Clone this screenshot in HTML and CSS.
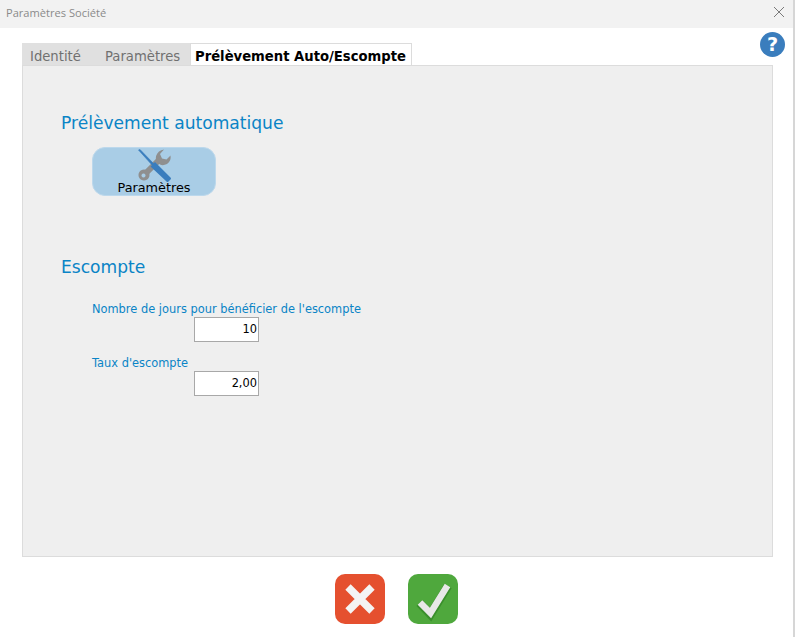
FILE: index.html
```html
<!DOCTYPE html>
<html lang="fr">
<head>
<meta charset="utf-8">
<title>Paramètres Société</title>
<link rel="stylesheet" href="styles.css">
</head>
<body>
<div class="window">
  <header class="titlebar">
    <span class="title">Paramètres Société</span>
    <svg class="close" width="12" height="12" viewBox="0 0 12 12"><path d="M1 1l10 10M11 1L1 11" stroke="#7a7a7a" stroke-width="1" fill="none"/></svg>
  </header>
  <main class="content">
    <div class="tabbar">
      <div class="tabs">
        <span class="tab tab-identite">Identité</span>
        <span class="tab tab-params">Paramètres</span>
        <span class="tab tab-active">Prélèvement Auto/Escompte</span>
      </div>
      <svg class="help" width="25" height="25" viewBox="0 0 26 26"><circle cx="13" cy="13" r="13" fill="#3a7dbd"/><text x="13" y="20" text-anchor="middle" class="help-mark">?</text></svg>
    </div>
    <section class="panel">
      <h2 class="heading">Prélèvement automatique</h2>
      <button class="param-btn" type="button">
        <svg class="tools" width="34" height="33" viewBox="0 0 34 33">
          <path d="M8 24L21 11" stroke="#8f8f8f" stroke-width="6" fill="none"/>
          <path fill-rule="evenodd" d="M6 20.500a5.500 5.500 0 1 1-.01 0zM5.500 24.500a2 2 0 1 0 .01 0z" fill="#8f8f8f"/>
          <path d="M26 .5L22 5l2 4.500 4.500 1 4-4q1 5.500-3.500 8.500-4 2-7 .5L18 12q-1-6 3-9.500Q23 1 26 .5z" fill="#8f8f8f"/>
          <path d="M.5 1L2 .5l14 14.500-1.500 1.500z" fill="#3a7dbd" stroke="#3a7dbd" stroke-width=".6"/>
          <path d="M12.500 17.500l4.500-4.500 15.500 15.500q1 1 0 2l-2 2q-1 1-2 0z" fill="#3a7dbd"/>
        </svg>
        <span class="btn-label">Paramètres</span>
      </button>
      <h2 class="heading heading-escompte">Escompte</h2>
      <div class="field field-days">
        <label class="field-label">Nombre de jours pour bénéficier de l'escompte</label>
        <div class="value">10</div>
      </div>
      <div class="field field-rate">
        <label class="field-label">Taux d'escompte</label>
        <div class="value">2,00</div>
      </div>
    </section>
    <footer class="actions">
      <svg width="50" height="50" viewBox="0 0 50 50"><rect width="50" height="50" rx="10" fill="#e5502f"/><path d="M13 13l24 24M37 13L13 37" stroke="#f4f4f4" stroke-width="7.500" fill="none"/></svg>
      <svg width="50" height="50" viewBox="0 0 50 50"><rect width="50" height="50" rx="10" fill="#4fa83d"/><path d="M11.500 29l11 11.500L40 12" stroke="#3a8f2c" stroke-width="8.500" fill="none"/><path d="M12 28.500l10.500 10.500L39.500 11.500" stroke="#e8e8e8" stroke-width="6.500" fill="none"/></svg>
    </footer>
  </main>
</div>
</body>
</html>
```

FILE: styles.css
```css
* { box-sizing: border-box; }
html, body { margin: 0; height: 100%; background: #fff; }
body { font-family: "DejaVu Sans", Verdana, sans-serif; }
.window { width: 795px; height: 637px; border-right: 2px solid #d6d6d6; display: flex; flex-direction: column; }
.titlebar { height: 28px; flex: none; background: #f2f2f2; display: flex; align-items: center; justify-content: space-between; padding: 0 8px 4px 6px; }
.title { font-family: "Open Sans", "Noto Sans", sans-serif; font-size: 11.100px; color: #8a8a8a; }
.content { flex: 1; padding: 0 20px 0 22px; display: flex; flex-direction: column; }
.tabbar { height: 37px; flex: none; display: flex; align-items: flex-end; position: relative; }
.tabs { display: flex; height: 22px; }
.tab { font-size: 13.200px; display: flex; align-items: center; padding-top: 4px; background: #e0e0e0; color: #707070; }
.tab-identite { width: 60px; padding-left: 8px; }
.tab-params { width: 108px; padding-left: 23px; }
.tab-active { width: 222px; padding-left: 4px; background: #fff; color: #000; font-weight: 700; border: 1px solid #dcdcdc; border-bottom: 0; }
.help { position: absolute; right: -12px; top: 4px; }
.help-mark { font-family: "DejaVu Sans", sans-serif; font-weight: 700; font-size: 20px; fill: #fff; }
.panel { height: 492px; flex: none; background: #efefef; border: 1px solid #dcdcdc; padding: 0 0 0 38px; }
.heading { margin: 47px 0 0; font-size: 17.100px; line-height: 20px; font-weight: 400; color: #0a84c6; }
.heading-escompte { margin-top: 61px; }
.param-btn { display: block; position: relative; margin: 14px 0 0 31px; width: 124px; height: 49px; padding: 0; border: 1px solid #bcd8ec; border-radius: 13px; background: #a9cde6; font-family: inherit; }
.tools { position: absolute; left: 45px; top: 1px; }
.btn-label { position: absolute; left: 0; right: 0; bottom: -1px; font-size: 12.800px; line-height: 16px; color: #000; text-align: center; }
.field { margin-left: 31px; }
.field-days { margin-top: 25px; }
.field-rate { margin-top: 14px; }
.field-label { display: block; font-size: 11.420px; line-height: 14px; color: #0a84c6; }
.value { margin: 1px 0 0 102px; width: 65px; height: 25px; background: #fff; border: 1px solid #a8a8a8; font-size: 11.400px; line-height: 23px; text-align: right; padding-right: 1px; color: #000; }
.actions { flex: 1; display: flex; justify-content: center; gap: 23px; padding-top: 17px; margin-left: -3px; }
```
